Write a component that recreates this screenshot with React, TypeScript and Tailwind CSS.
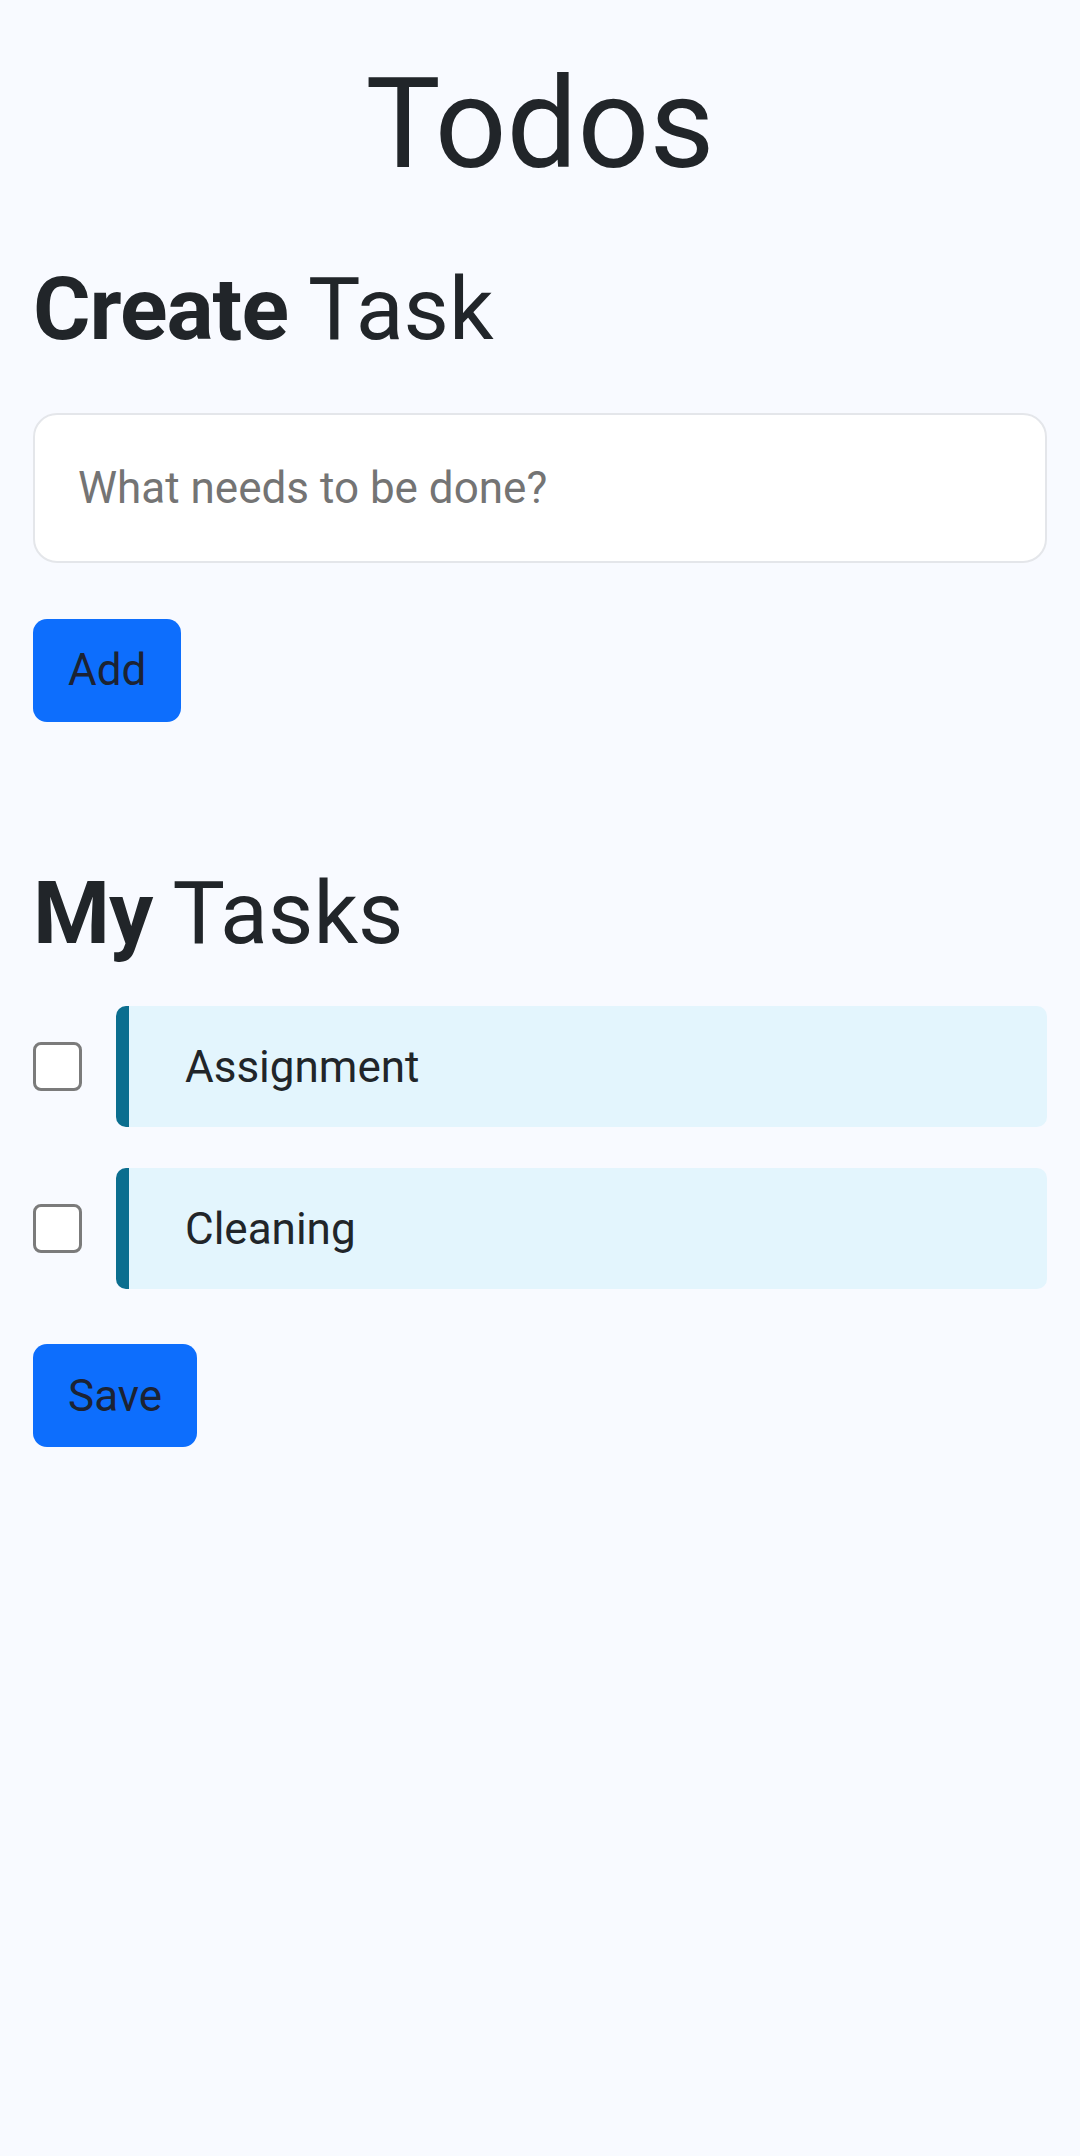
import { useState } from "react"

const tasks = ["Assignment", "Cleaning"]

export default function App() {
  const [text, setText] = useState("")
  const [done, setDone] = useState<boolean[]>(tasks.map(() => false))

  return (
    <div
      className="min-h-[2156px] w-full bg-[#f8faff] px-[33px] text-[#212529]"
      style={{ fontFamily: "Roboto, 'Noto Sans', sans-serif" }}
    >
      <h1 className="pt-[49px] text-center text-[126px] leading-[1.2] font-normal">Todos</h1>

      {/* create */}
      <h2 className="mt-[56px] text-[88px] leading-[1.2] font-normal">
        <span className="font-bold tracking-[-1px]">Create</span> Task
      </h2>
      <input
        value={text}
        onChange={(e) => setText(e.target.value)}
        placeholder="What needs to be done?"
        className="mt-[51px] block h-[150px] w-full rounded-[24px] border-2 border-[#e4e6ea] bg-white px-[43px] text-[44px] text-[#212529] outline-none placeholder:text-[#747474]"
      />
      <button className="mt-[56px] block h-[103px] rounded-[14px] bg-[#0d6efd] px-[35px] text-[44px] text-[#1c2333]">
        Add
      </button>

      {/* list */}
      <h2 className="mt-[138px] text-[88px] leading-[1.2] font-normal">
        <span className="font-bold tracking-[-1px]">My</span> Tasks
      </h2>
      <ul className="mt-[41px] flex flex-col gap-[41px]">
        {tasks.map((t, i) => (
          <li key={t} className="flex items-center gap-[34px]">
            <input
              type="checkbox"
              checked={done[i]}
              onChange={() => setDone(done.map((d, j) => (j === i ? !d : d)))}
              className="h-[49px] w-[49px] shrink-0 appearance-none rounded-[8px] border-[3px] border-[#7b7b7b] bg-white"
            />
            <div className="flex h-[121px] flex-1 items-center rounded-[10px] border-l-[13px] border-[#0b6e8f] bg-[#e3f5fd] pl-[56px] text-[44px]">
              {t}
            </div>
          </li>
        ))}
      </ul>
      <button className="mt-[55px] block h-[103px] rounded-[14px] bg-[#0d6efd] px-[35px] text-[44px] text-[#1c2333]">
        Save
      </button>
    </div>
  )
}
